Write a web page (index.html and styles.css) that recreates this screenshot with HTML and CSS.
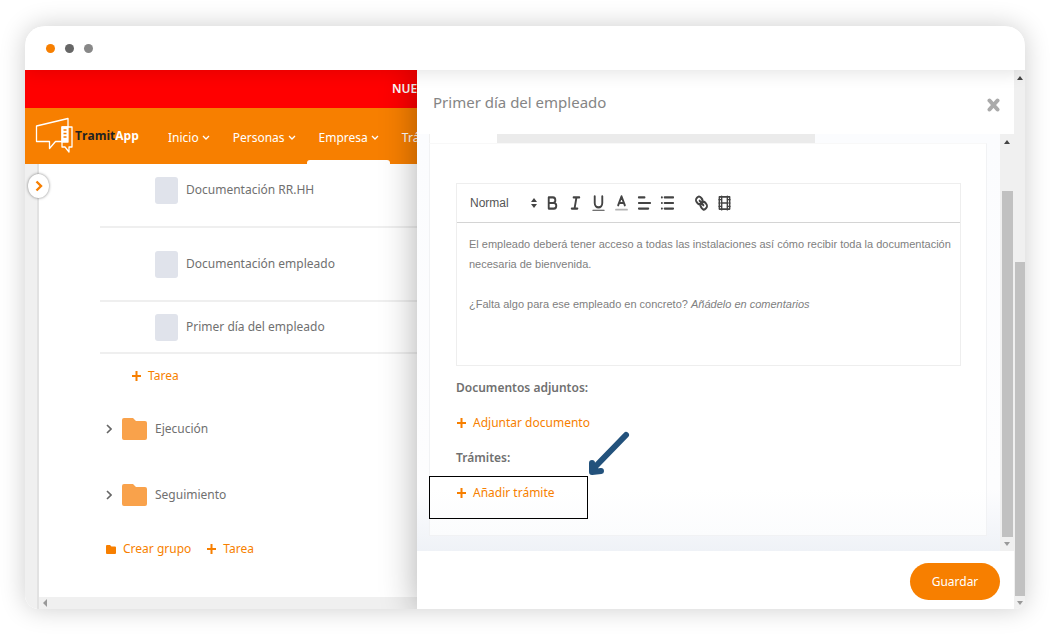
FILE: index.html
```html
<!DOCTYPE html>
<html lang="es">
<head>
    <meta charset="UTF-8">
    <meta name="viewport" content="width=device-width, initial-scale=1.0">
    <title>TramitApp</title>
    <link rel="stylesheet" href="styles.css">
</head>
<body>
    <div class="window">
        <div class="window-bar">
            <span class="dot dot-orange"></span>
            <span class="dot dot-dark"></span>
            <span class="dot dot-gray"></span>
        </div>
        <div class="window-body">
            <div class="page">
                <div class="banner">NUEV</div>
                <header class="navbar">
                    <a class="logo" href="#">
                        <svg width="40" height="38" viewBox="0 0 40 38" fill="none" stroke="#fff" stroke-width="1.3" stroke-linejoin="round">
                            <path d="M33 10V1.500L1.500 9v15.500h13v7l6-7H27"/>
                            <path d="M27 10h10v20h-3v5l-4-5h-3z"/>
                            <path d="M27 10h6v15h-6z" fill="#fff"/>
                            <path d="M28.500 13h3M28.500 16.500h3M28.500 20h3" stroke="#f77f00"/>
                        </svg>
                        <span><span class="logo-dark">Tramit</span>App</span>
                    </a>
                    <nav class="menu">
                        <a href="#">Inicio <svg width="8" height="6" viewBox="0 0 8 6"><path d="M1 1l3 3 3-3"/></svg></a>
                        <a href="#">Personas <svg width="8" height="6" viewBox="0 0 8 6"><path d="M1 1l3 3 3-3"/></svg></a>
                        <a href="#" class="active">Empresa <svg width="8" height="6" viewBox="0 0 8 6"><path d="M1 1l3 3 3-3"/></svg></a>
                        <a href="#">Trá</a>
                    </nav>
                </header>
                <div class="content">
                    <aside class="rail">
                        <button class="rail-toggle" aria-label="Abrir menú">
                            <svg width="8" height="12" viewBox="0 0 8 12"><path d="M1.500 1.500L6 6l-4.500 4.500"/></svg>
                        </button>
                    </aside>
                    <main class="main">
                        <div class="tree">
                            <label class="task"><input type="checkbox">Documentación RR.HH</label>
                            <label class="task"><input type="checkbox">Documentación empleado</label>
                            <label class="task task-short"><input type="checkbox">Primer día del empleado</label>
                            <a class="link add-task" href="#"><svg class="plus" width="9" height="10" viewBox="0 0 9 10"><path d="M4.500 0v10M0 5h9"/></svg>Tarea</a>
                            <div class="group">
                                <svg class="chevron" width="6" height="10" viewBox="0 0 6 10"><path d="M1 1l4 4-4 4"/></svg>
                                <svg width="25" height="22" viewBox="0 0 25 22"><path fill="#f9a24b" d="M2 0h9l3 3h9a2 2 0 0 1 2 2v15a2 2 0 0 1-2 2H2a2 2 0 0 1-2-2V2a2 2 0 0 1 2-2z"/></svg>
                                <span>Ejecución</span>
                            </div>
                            <div class="group">
                                <svg class="chevron" width="6" height="10" viewBox="0 0 6 10"><path d="M1 1l4 4-4 4"/></svg>
                                <svg width="25" height="22" viewBox="0 0 25 22"><path fill="#f9a24b" d="M2 0h9l3 3h9a2 2 0 0 1 2 2v15a2 2 0 0 1-2 2H2a2 2 0 0 1-2-2V2a2 2 0 0 1 2-2z"/></svg>
                                <span>Seguimiento</span>
                            </div>
                            <div class="actions">
                                <a class="link" href="#"><svg width="10" height="9" viewBox="0 0 10 9"><path fill="#f77f00" d="M1 0h3l1.500 1.500H9a1 1 0 0 1 1 1V8a1 1 0 0 1-1 1H1a1 1 0 0 1-1-1V1a1 1 0 0 1 1-1z"/></svg>Crear grupo</a>
                                <a class="link" href="#"><svg class="plus" width="9" height="10" viewBox="0 0 9 10"><path d="M4.500 0v10M0 5h9"/></svg>Tarea</a>
                            </div>
                        </div>
                        <div class="scroll-x"><svg width="4" height="8" viewBox="0 0 4 8"><path d="M4 0v8L0 4z" fill="#999"/></svg></div>
                    </main>
                </div>
            </div>

            <section class="drawer">
                <header class="drawer-header">
                    <h1>Primer día del empleado</h1>
                    <button class="close" aria-label="Cerrar">
                        <svg width="13" height="14" viewBox="0 0 13 14"><path d="M2.500 2.500l8 9M10.500 2.500l-8 9"/></svg>
                    </button>
                </header>
                <div class="drawer-scroll">
                    <div class="drawer-body">
                        <div class="tabs"><span class="tab-on"></span><span class="tab-off"></span></div>
                        <div class="panel">
                            <div class="editor">
                                <div class="toolbar">
                                    <div class="format">
                                        <select aria-label="Formato"><option>Normal</option></select>
                                        <svg width="6" height="10" viewBox="0 0 6 10"><path fill="#444" d="M3 0l3 4H0zM3 10L0 6h6z"/></svg>
                                    </div>
                                    <button aria-label="Negrita"><svg viewBox="0 0 18 18" preserveAspectRatio="none"><path d="M5 4h4.500a2.500 2.500 0 0 1 0 5H5zM5 9h5.500a2.500 2.500 0 0 1 0 5H5z"/></svg></button>
                                    <button aria-label="Cursiva"><svg viewBox="0 0 18 18" preserveAspectRatio="none"><path d="M7 4h6M5 14h6M8 14l2-10"/></svg></button>
                                    <button aria-label="Subrayado"><svg viewBox="0 0 18 18" preserveAspectRatio="none"><path d="M5 3v6a4 4 0 0 0 8 0V3"/><path class="thin" d="M3 15.500h12"/></svg></button>
                                    <button aria-label="Color"><svg viewBox="0 0 18 18" preserveAspectRatio="none"><path d="M5.500 11L9 3l3.500 8M6.400 9h5.200"/><path class="faded" d="M3 15h12"/></svg></button>
                                    <button aria-label="Alinear"><svg viewBox="0 0 18 18" preserveAspectRatio="none"><path d="M3 4h6M3 9h12M3 14h10"/></svg></button>
                                    <button aria-label="Lista"><svg viewBox="0 0 18 18" preserveAspectRatio="none"><path d="M6 4h9M6 9h9M6 14h9M3 4h.1M3 9h.1M3 14h.1"/></svg></button>
                                    <button class="spaced" aria-label="Enlace"><svg viewBox="0 0 18 18" preserveAspectRatio="none"><path d="M7 7l4 4M8.900 4.577a3.476 3.476 0 0 1 .36 4.679A3.476 3.476 0 0 1 4.577 8.900C3.185 7.500 2.035 6.400 4.217 4.217S7.500 3.185 8.900 4.577zM13.423 9.100a3.476 3.476 0 0 0-4.679-.36 3.476 3.476 0 0 0 .36 4.679c1.392 1.392 2.500 2.542 4.679.36S14.815 10.500 13.423 9.100z"/></svg></button>
                                    <button aria-label="Vídeo"><svg viewBox="0 0 18 18" preserveAspectRatio="none"><path class="mid" d="M3.500 3.500h11v11h-11zM6 3v12M12 3v12M6 9h6"/><path class="thin" d="M3 6h3M3 9h3M3 12h3M12 6h3M12 9h3M12 12h3"/></svg></button>
                                </div>
                                <div class="editor-text" contenteditable="true" role="textbox" aria-label="Descripción" spellcheck="false">
                                    <p>El empleado deberá tener acceso a todas las instalaciones así cómo recibir toda la documentación necesaria de bienvenida.</p>
                                    <p><br></p>
                                    <p>¿Falta algo para ese empleado en concreto? <em>Añádelo en comentarios</em></p>
                                </div>
                            </div>
                            <h2>Documentos adjuntos:</h2>
                            <a class="link" href="#"><svg class="plus" width="9" height="10" viewBox="0 0 9 10"><path d="M4.500 0v10M0 5h9"/></svg>Adjuntar documento</a>
                            <h2>Trámites:</h2>
                            <div class="highlight-anchor">
                                <a class="link" href="#"><svg class="plus" width="9" height="10" viewBox="0 0 9 10"><path d="M4.500 0v10M0 5h9"/></svg>Añadir trámite</a>
                                <div class="highlight"></div>
                                <svg class="arrow" width="44" height="46" viewBox="0 0 44 46"><path d="M39 4L6 38M5 32v9l9-1"/></svg>
                            </div>
                        </div>
                    </div>
                    <div class="scrollbar scrollbar-inner">
                        <svg width="6" height="4" viewBox="0 0 6 4"><path d="M0 4h6L3 0z" fill="#444"/></svg>
                        <span class="thumb"></span>
                        <svg width="6" height="4" viewBox="0 0 6 4"><path d="M0 0h6L3 4z" fill="#999"/></svg>
                    </div>
                </div>
                <footer class="drawer-footer">
                    <button class="save">Guardar</button>
                </footer>
            </section>

            <div class="scrollbar scrollbar-outer">
                <svg width="6" height="4" viewBox="0 0 6 4"><path d="M0 4h6L3 0z" fill="#444"/></svg>
                <span class="thumb"></span>
                <svg width="6" height="4" viewBox="0 0 6 4"><path d="M0 0h6L3 4z" fill="#999"/></svg>
            </div>
        </div>
    </div>
</body>
</html>
```
FILE: styles.css
```css
* {
    box-sizing: border-box;
}
body {
    margin: 0;
    min-height: 100vh;
    padding: 26px 36px 25px 25px;
    display: flex;
    background: #fff;
    color: #707070;
    font-family: "Noto Sans", sans-serif;
    font-size: 12px;
    line-height: 20px;
}
button {
    border: none;
    padding: 0;
    background: none;
    font-family: inherit;
    cursor: pointer;
}
a {
    text-decoration: none;
}
svg {
    flex: none;
}

/* browser frame */
.window {
    flex: 1;
    display: flex;
    flex-direction: column;
    border-radius: 20px 20px 10px 14px;
    box-shadow: 0 0 26px rgba(0,0,0,0.2);
    overflow: hidden;
}
.window-bar {
    position: relative;
    z-index: 3;
    height: 44px;
    display: flex;
    align-items: center;
    gap: 10px;
    padding-left: 21px;
    background: #fff;
    box-shadow: 0 0 20px rgba(0,0,0,0.14);
}
.dot {
    width: 9px;
    height: 9px;
    border-radius: 50%;
}
.dot-orange {
    background: #f77f00;
}
.dot-dark {
    background: #666;
}
.dot-gray {
    background: #888;
}
.window-body {
    flex: 1;
    display: grid;
    grid-template-columns: 392fr 597fr 11px;
}

/* page behind the drawer */
.page {
    display: flex;
    flex-direction: column;
    min-width: 0;
    overflow: hidden;
    background: #fff;
}
.banner {
    height: 38px;
    padding-left: 367px;
    background: #ff0000;
    color: #fff;
    font-weight: 600;
    line-height: 38px;
    white-space: nowrap;
}
.navbar {
    height: 56px;
    display: flex;
    padding-left: 10px;
    background: #f77f00;
}
.logo {
    display: flex;
    align-items: center;
    width: 124px;
    flex: none;
    color: #fff;
    font-family: "Open Sans", "Noto Sans", sans-serif;
    font-weight: 700;
}
.logo-dark {
    color: #222;
}
.menu {
    display: flex;
}
.menu a {
    display: flex;
    align-items: center;
    gap: 3px;
    padding: 7px 11px 0 12px;
    border-bottom: 4px solid transparent;
    color: #fff;
    white-space: nowrap;
}
.menu a:first-child {
    padding-left: 9px;
}
.menu a.active {
    position: relative;
}
.menu a.active::after {
    content: "";
    position: absolute;
    left: 0;
    right: 0;
    bottom: -4px;
    height: 4px;
    border-radius: 3px 3px 0 0;
    background: #fff;
}
.menu svg {
    fill: none;
    stroke: #fff;
    stroke-width: 1.3;
}
.content {
    flex: 1;
    display: flex;
    min-height: 0;
}
.rail {
    position: relative;
    width: 14px;
    flex: none;
    border-right: 2px solid #e2e2e2;
    background: #f0f0f0;
}
.rail-toggle {
    position: absolute;
    top: 10px;
    left: 3px;
    width: 21px;
    height: 24px;
    display: flex;
    align-items: center;
    justify-content: center;
    border-radius: 50%;
    background: #fff;
    box-shadow: 0 0 3px rgba(0,0,0,0.5);
}
.rail-toggle svg {
    fill: none;
    stroke: #f77f00;
    stroke-width: 2.4;
}
.main {
    flex: 1;
    min-width: 0;
    display: flex;
    flex-direction: column;
    overflow: hidden;
}
.tree {
    flex: 1;
    margin-top: -10px;
    padding-left: 61px;
}
.task {
    display: flex;
    align-items: center;
    gap: 8px;
    height: 74px;
    padding-left: 55px;
    border-bottom: 2px solid #efefef;
}
.task-short {
    height: 52px;
}
.task input {
    appearance: none;
    width: 23px;
    height: 27px;
    margin: 0;
    border-radius: 3px;
    background: #e0e3eb;
}
.link {
    display: flex;
    align-items: center;
    gap: 7px;
    color: #f77f00;
}
.plus {
    fill: none;
    stroke: #f77f00;
    stroke-width: 2;
}
.add-task {
    padding: 12px 0 0 32px;
}
.group {
    display: flex;
    align-items: center;
    height: 66px;
    gap: 8px;
    padding-left: 6px;
}
.add-task + .group {
    margin-top: 10px;
}
.chevron {
    margin-right: 2px;
    fill: none;
    stroke: #666;
    stroke-width: 1.6;
}
.actions {
    display: flex;
    gap: 16px;
    padding: 11px 0 0 6px;
}
.scroll-x {
    height: 12px;
    display: flex;
    align-items: center;
    padding-left: 4px;
    background: #f0f0f0;
}

/* drawer */
.drawer {
    position: relative;
    z-index: 2;
    min-width: 0;
    display: flex;
    flex-direction: column;
    background: #fff;
    box-shadow: 0 0 34px rgba(0,0,0,0.32);
    clip-path: inset(0 0 0 -40px);
}
.drawer-header {
    height: 64px;
    display: flex;
    align-items: center;
    justify-content: space-between;
    padding: 3px 14px 4px 16px;
}
.drawer-header h1 {
    margin: 0;
    color: #858585;
    font-size: 15px;
    font-weight: 400;
}
.close {
    display: flex;
    padding-top: 7px;
}
.close svg {
    fill: none;
    stroke: #aaa;
    stroke-width: 4;
    stroke-linecap: round;
}
.drawer-scroll {
    flex: 1;
    display: flex;
}
.drawer-body {
    flex: 1;
    min-width: 0;
    padding: 0 13px 15px 12px;
    background: linear-gradient(#fbfcfe, #fdfdfe 85%, #eff2f7);
}
.tabs {
    display: flex;
    height: 9px;
}
.tab-on {
    width: 68px;
    border-left: 1px solid #f0f0f0;
    background: #fff;
}
.tab-off {
    width: 57%;
    background: #ebebeb;
}
.panel {
    padding: 39px 25px 32px 26px;
    border: 1px solid #f1f2f4;
    border-top-color: #f8f8f8;
    background: linear-gradient(#fff 88%, #fbfcfd);
}
.editor {
    border: 1px solid #eee;
}
.toolbar {
    display: flex;
    align-items: center;
    height: 39px;
    padding-left: 13px;
    border-bottom: 1px solid #d4d4d4;
}
.toolbar button {
    display: flex;
    justify-content: center;
    width: 23px;
}
.toolbar .spaced {
    margin-left: 11px;
}
.toolbar button svg {
    width: 17px;
    height: 20px;
    fill: none;
    stroke: #444;
    stroke-width: 2;
    stroke-linecap: round;
    stroke-linejoin: round;
}
.toolbar .thin {
    stroke-width: 1;
}
.toolbar .mid {
    stroke-width: 1.5;
}
.toolbar .faded {
    stroke-width: 1.5;
    opacity: 0.4;
}
.format {
    display: flex;
    align-items: center;
    width: 71px;
}
.format select {
    appearance: none;
    flex: 1;
    border: none;
    padding: 0;
    background: none;
    color: #555;
    font-family: "Liberation Sans", Arial, sans-serif;
    font-size: 12px;
}
.format svg {
    margin-right: 4px;
}
.editor-text {
    min-height: 142px;
    padding: 11px 8px 11px 12px;
    color: #808080;
    font-family: "Liberation Sans", Arial, sans-serif;
    font-size: 11px;
}
.editor-text p {
    margin: 0;
}
.panel h2 {
    margin: 12px 0 15px;
    color: #707070;
    font-size: 12px;
    font-weight: 600;
}
.panel .link {
    padding-left: 1px;
}
.panel .link + h2 {
    margin-top: 15px;
}

/* callout drawn over the form */
.highlight-anchor {
    position: relative;
}
.highlight {
    position: absolute;
    top: -7px;
    left: -27px;
    width: 159px;
    height: 43px;
    border: 1px solid #000;
    pointer-events: none;
}
.arrow {
    position: absolute;
    top: -52px;
    left: 131px;
    fill: none;
    stroke: #23527c;
    stroke-width: 6;
    stroke-linecap: round;
    stroke-linejoin: round;
    pointer-events: none;
}

.drawer-footer {
    display: flex;
    justify-content: flex-end;
    padding: 12px 14px 9px;
}
.save {
    width: 90px;
    height: 37px;
    border-radius: 19px;
    background: #f77f00;
    color: #fff;
    font-size: 12px;
}

/* scrollbars */
.scrollbar {
    display: flex;
    flex-direction: column;
    align-items: center;
    background: #f0f0f0;
}
.scrollbar .thumb {
    flex: 1;
    background: #c1c1c1;
}
.scrollbar-inner {
    width: 14px;
    padding: 6px 0 5px;
}
.scrollbar-inner .thumb {
    width: 11px;
    margin: 47px 0 5px;
}
.scrollbar-outer {
    padding: 6px 0 4px;
}
.scrollbar-outer .thumb {
    width: 10px;
    margin: 182px 0 5px;
}
```
